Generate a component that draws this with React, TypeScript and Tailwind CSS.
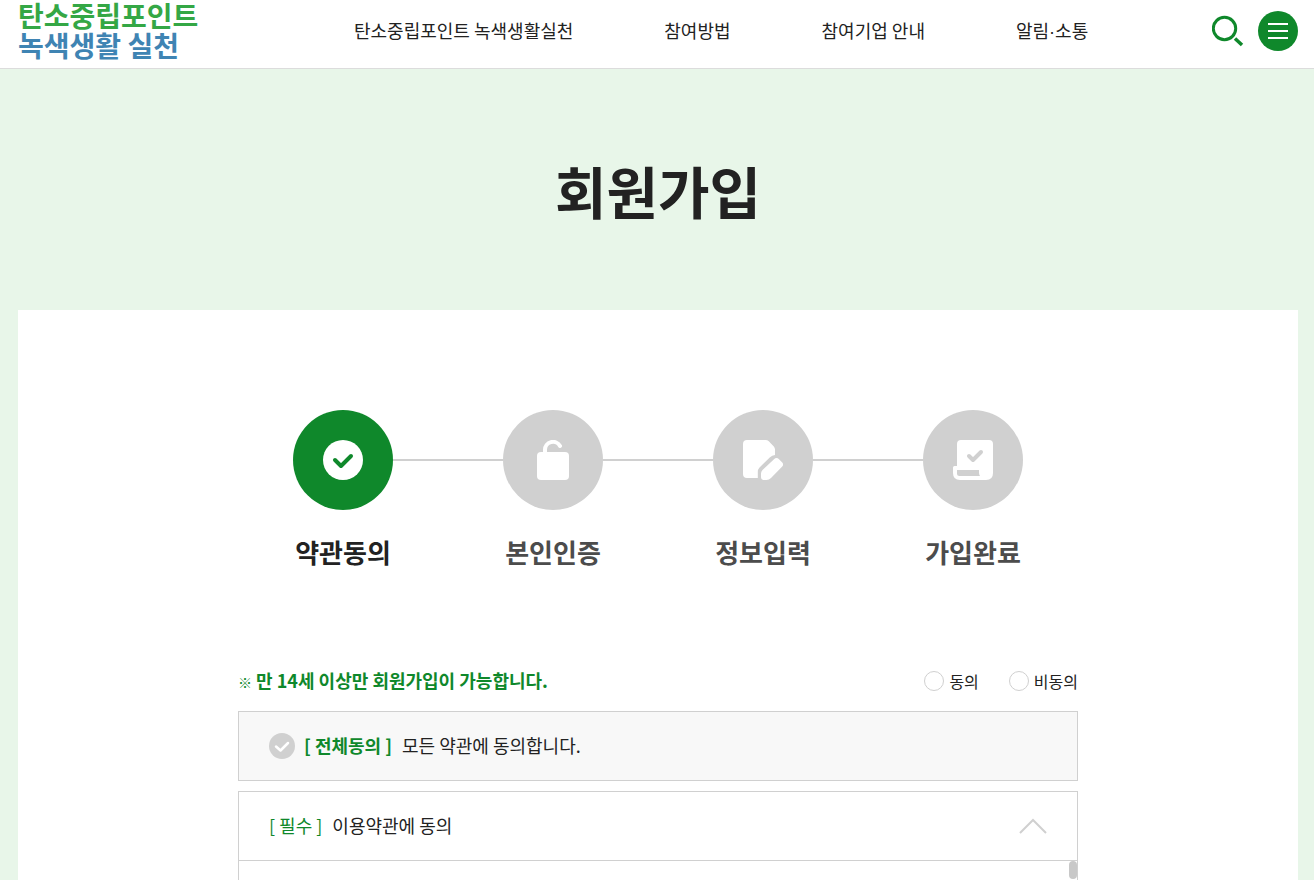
import type { ReactNode } from "react";

const NAV: { id: string; label: ReactNode }[] = [
  { id: "about", label: "탄소중립포인트 녹색생활실천" },
  { id: "how", label: "참여방법" },
  { id: "partners", label: "참여기업 안내" },
  {
    id: "news",
    label: (
      <>
        알림<span className="font-['Liberation_Sans',sans-serif]">·</span>소통
      </>
    ),
  },
];

const STEPS: { label: string; icon: ReactNode }[] = [
  {
    label: "약관동의",
    icon: (
      <>
        <circle cx="20" cy="20" r="20" fill="#fff" />
        <path d="M12 20l6 6L28 16" fill="none" stroke="#0f882b" strokeWidth="4" strokeLinecap="round" strokeLinejoin="round" />
      </>
    ),
  },
  {
    label: "본인인증",
    icon: (
      <>
        <rect x="4" y="12" width="32" height="28" rx="4" fill="#fff" />
        <path d="M12 13V10a8 8 0 0 1 15-4" fill="none" stroke="#fff" strokeWidth="4" strokeLinecap="round" />
      </>
    ),
  },
  {
    label: "정보입력",
    icon: (
      <>
        <path d="M4 0h18.500q2 0 3.300 1.300l5 5.200q1.200 1.300 1.200 3V15q-3 .2-5 2.200L16.500 27.500q-1.700 1.800-1.700 4.500V38H4q-4 0-4-4V4q0-4 4-4z" fill="#fff" />
        <path d="M31 19.200q2.500-2.400 5 0l3 3q2.200 2.300 0 4.600L28 38q-2 2-4.500 2h-2.500q-3 0-3-3v-3.500q0-2 1.500-3.500z" fill="#fff" />
      </>
    ),
  },
  {
    label: "가입완료",
    icon: (
      <>
        <path
          fillRule="evenodd"
          fill="#fff"
          d="M8 0h28q4 0 4 4v29q0 7-7 7H7q-7 0-7-7v-5.500q0-1.500 1.500-1.500H4V4q0-4 4-4zM4 30v3.500q0 2.500 2.500 2.500H27q-1-1.500-1-3.500V30z"
        />
        <path d="M16 16l4 4L28 12" fill="none" stroke="#d0d0d0" strokeWidth="4" strokeLinecap="round" strokeLinejoin="round" />
      </>
    ),
  },
];

function Header() {
  return (
    <header className="flex h-[69px] items-start justify-between border-b border-[#dcdcdc] bg-white pl-[18px] pr-4">
      <a href="#" className="w-[336px] text-[28px] font-bold leading-[30px]">
        <span className="block text-[#34a745]">탄소중립포인트</span>
        <span className="block text-[#3f84b3]">녹색생활 실천</span>
      </a>
      <nav className="flex flex-1 gap-[91px] pt-[15px] text-[18px] leading-[30px]">
        {NAV.map(({ id, label }) => (
          <a key={id} href={`#${id}`} className="whitespace-nowrap">
            {label}
          </a>
        ))}
      </nav>
      <div className="flex items-center gap-[14px] pt-[11px]">
        <button type="button" aria-label="검색" className="size-8">
          <svg viewBox="0 0 32 32" className="size-8" fill="none" stroke="#0f882b" strokeWidth="3">
            <circle cx="12.500" cy="13.500" r="11.200" />
            <path d="M23 23.500l7 6.500" strokeWidth="3.500" />
          </svg>
        </button>
        <button type="button" aria-label="전체메뉴" className="flex size-10 flex-col items-center justify-center gap-[5px] rounded-full bg-[#0f882b]">
          <span className="h-0.5 w-5 bg-white" />
          <span className="h-0.5 w-5 bg-white" />
          <span className="h-0.5 w-5 bg-white" />
        </button>
      </div>
    </header>
  );
}

function Steps() {
  return (
    <ol className="flex justify-center gap-[110px]">
      {STEPS.map(({ label, icon }, i) => (
        <li key={label} className="relative flex w-[100px] flex-col items-center">
          {i > 0 && <span className="absolute right-full top-[49px] h-0.5 w-[110px] bg-[#d0d0d0]" />}
          <span className={i === 0 ? "flex size-[100px] items-center justify-center rounded-full bg-[#0f882b]" : "flex size-[100px] items-center justify-center rounded-full bg-[#d0d0d0]"}>
            <svg viewBox="0 0 40 40" className="size-10" aria-hidden="true">
              {icon}
            </svg>
          </span>
          <span className={i === 0 ? "mt-6 whitespace-nowrap text-[26px] font-bold leading-9 text-[#222]" : "mt-6 whitespace-nowrap text-[26px] font-bold leading-9 text-[#4c4c4c]"}>
            {label}
          </span>
        </li>
      ))}
    </ol>
  );
}

function Radio({ label }: { label: string }) {
  return (
    <label className="flex items-center gap-[5px] text-[16px] leading-6">
      <input type="radio" name="age" className="size-5 appearance-none rounded-full border border-[#d0d0d0] bg-white checked:border-[6px] checked:border-[#0f882b]" />
      {label}
    </label>
  );
}

export default function App() {
  return (
    <div className="flex min-h-screen flex-col bg-[#e8f6e9] font-['Noto_Sans_CJK_KR',sans-serif] text-[#222]">
      <Header />
      <main className="flex flex-1 flex-col pl-[18px] pr-4">
        <h1 className="py-20 text-center text-[56px] font-bold leading-[81px]">회원가입</h1>
        <section className="flex flex-1 flex-col bg-white pt-[100px]">
          <Steps />
          <div className="mx-auto flex w-full max-w-[840px] flex-1 flex-col pt-[99px]">
            <div className="flex h-6 items-center justify-between">
              <p className="pb-0.5 text-[18px] font-bold leading-6 text-[#0f882b]">
                <span className="text-[14px] leading-none">※</span> 만 14세 이상만 회원가입이 가능합니다.
              </p>
              <div className="flex gap-[30px]">
                <Radio label="동의" />
                <Radio label="비동의" />
              </div>
            </div>
            <label className="mt-[18px] flex h-[70px] items-center border border-[#d0d0d0] bg-[#f8f8f8] px-[30px] pb-0.5 text-[18px]">
              <span className="mr-[9px] mt-0.5 grid size-[26px] place-items-center">
                <input type="checkbox" className="col-start-1 row-start-1 size-[26px] appearance-none rounded-full bg-[#d0d0d0] checked:bg-[#0f882b]" />
                <svg viewBox="0 0 26 26" className="pointer-events-none col-start-1 row-start-1 size-[26px]" fill="none" stroke="#fff" strokeWidth="2.500" strokeLinecap="round" strokeLinejoin="round">
                  <path d="M7 13.500l4.500 4L19 10" />
                </svg>
              </span>
              <strong className="mr-[10px] font-bold text-[#0f882b]">[ 전체동의 ]</strong>
              모든 약관에 동의합니다.
            </label>
            <div className="mt-[10px] flex flex-1 flex-col border border-b-0 border-[#d0d0d0]">
              <button type="button" aria-expanded="true" className="flex h-[69px] items-center border-b border-[#d0d0d0] px-[30px] pb-0.5 text-[18px]">
                <span className="mr-[10px] text-[#0f882b]">[ 필수 ]</span>
                이용약관에 동의
                <svg viewBox="0 0 28 16" className="ml-auto mt-0.5 h-4 w-7" fill="none" stroke="#d0d0d0" strokeWidth="2">
                  <path d="M1 15L14 2l13 13" />
                </svg>
              </button>
              <div className="flex justify-end">
                <span className="h-[18px] w-2 rounded-full bg-[#c8c8c8]" />
              </div>
            </div>
          </div>
        </section>
      </main>
    </div>
  );
}
